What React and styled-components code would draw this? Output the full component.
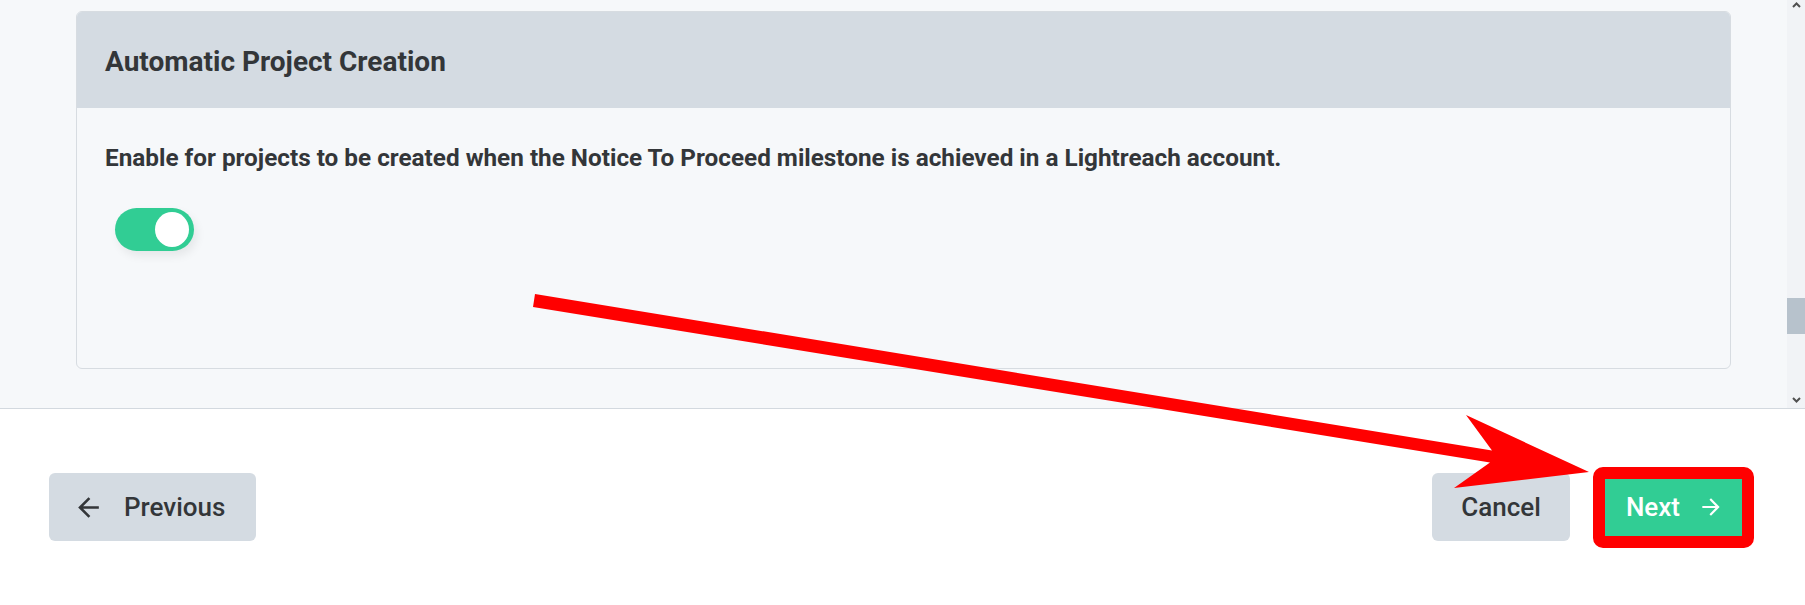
import React from "react";
import styled, { createGlobalStyle } from "styled-components";

const GlobalStyle = createGlobalStyle`
  html, body { margin: 0; padding: 0; background: #ffffff; overflow: hidden; }
  body { font-family: Roboto, "Liberation Sans", Arial, sans-serif; color: #333333; }
  * { box-sizing: border-box; }
`;

const Page = styled.div`
  position: relative;
  width: 1805px;
  height: 605px;
  display: flex;
  flex-direction: column;
  overflow: hidden;
`;

const ScrollArea = styled.div`
  height: 409px;
  flex: none;
  display: flex;
  background: #f6f8fa;
  border-bottom: 1px solid #d3d9df;
`;

const Content = styled.div`
  flex: 1;
  padding: 11px 56px 0 76px;
  overflow: hidden;
`;

const Card = styled.section`
  border: 1px solid #d7dce1;
  border-radius: 6px;
  background: #f6f8fa;
  overflow: hidden;
`;

const CardHeader = styled.header`
  height: 96px;
  display: flex;
  align-items: center;
  padding: 4px 28px 0;
  background: #d4dbe2;
`;

const Title = styled.h2`
  margin: 0;
  font-size: 28px;
  font-weight: 700;
  color: #333639;
  line-height: 1;
`;

const CardBody = styled.div`
  padding: 36px 28px 117px;
`;

const Description = styled.p`
  margin: 0;
  font-size: 24.3px;
  line-height: 28px;
  font-weight: 700;
  color: #333639;
`;

const ToggleTrack = styled.button`
  margin: 36px 0 0 10px;
  width: 79px;
  height: 43px;
  border: none;
  border-radius: 22px;
  padding: 0 5px;
  display: flex;
  align-items: center;
  justify-content: ${(p) => (p.$on ? "flex-end" : "flex-start")};
  background: ${(p) => (p.$on ? "#31cd94" : "#c5ccd3")};
  box-shadow: 3px 5px 10px rgba(0, 0, 0, 0.07);
  cursor: pointer;
`;

const Knob = styled.span`
  width: 34px;
  height: 35px;
  border-radius: 50%;
  background: #ffffff;
`;

const Scrollbar = styled.div`
  width: 18px;
  flex: none;
  display: flex;
  flex-direction: column;
  background: #f1f3f6;
`;

const ScrollArrow = styled.div`
  height: 17px;
  flex: none;
  display: flex;
  align-items: ${(p) => (p.$down ? "flex-end" : "flex-start")};
  justify-content: center;
  padding: ${(p) => (p.$down ? "0 0 5px" : "2px 0 0")};
`;

const TrackGap = styled.div`
  flex: ${(p) => (p.$grow ? "1" : "none")};
  height: ${(p) => (p.$grow ? "auto" : `${p.$h}px`)};
`;

const Thumb = styled.div`
  height: 36px;
  flex: none;
  background: #b7c2cc;
`;

const Footer = styled.footer`
  flex: 1;
  display: flex;
  align-items: center;
  justify-content: space-between;
  padding: 0 56px 0 49px;
  background: #ffffff;
`;

const ButtonGroup = styled.div`
  display: flex;
  align-items: center;
  gap: 28px;
`;

const Button = styled.button`
  position: relative;
  height: 68px;
  padding: ${(p) => p.$pad || "0 28px"};
  border: none;
  border-radius: 6px;
  display: flex;
  align-items: center;
  gap: ${(p) => p.$gap || 0}px;
  font-family: Roboto, "Liberation Sans", Arial, sans-serif;
  font-size: 26px;
  font-weight: 500;
  color: ${(p) => (p.$primary ? "#ffffff" : "#333639")};
  background: ${(p) => (p.$primary ? "#31cd94" : "#d4dbe2")};
  cursor: pointer;
`;

const Highlight = styled.span`
  position: absolute;
  top: -6px;
  left: -5px;
  right: -5px;
  bottom: -7px;
  border: 12px solid #ff0000;
  border-radius: 10px;
  pointer-events: none;
`;

const Annotation = styled.svg`
  position: absolute;
  left: 0;
  top: 0;
  width: 1805px;
  height: 605px;
  pointer-events: none;
`;

const ArrowBack = ({ size }) => (
  <svg width={size} height={size} viewBox="0 0 24 24" fill="currentColor" aria-hidden="true">
    <path d="M20 11H7.83l5.59-5.59L12 4l-8 8 8 8 1.41-1.41L7.83 13H20v-2z" />
  </svg>
);

const ArrowForward = ({ size }) => (
  <svg width={size} height={size} viewBox="0 0 24 24" fill="currentColor" aria-hidden="true">
    <path d="M12 4l-1.41 1.41L16.17 11H4v2h12.17l-5.58 5.59L12 20l8-8z" />
  </svg>
);

const Chevron = ({ down }) => (
  <svg width="9" height="6" viewBox="0 0 9 6" aria-hidden="true">
    <path
      d={down ? "M1 1 L4.5 4.5 L8 1" : "M1 5 L4.5 1.5 L8 5"}
      fill="none"
      stroke="#505050"
      strokeWidth="2"
    />
  </svg>
);

export default function App() {
  return (
    <>
      <GlobalStyle />
      <Page>
        <ScrollArea>
          <Content>
            <Card>
              <CardHeader>
                <Title>Automatic Project Creation</Title>
              </CardHeader>
              <CardBody>
                <Description>
                  Enable for projects to be created when the Notice To Proceed milestone is achieved in a Lightreach account.
                </Description>
                <ToggleTrack $on aria-pressed="true">
                  <Knob />
                </ToggleTrack>
              </CardBody>
            </Card>
          </Content>
          <Scrollbar>
            <ScrollArrow>
              <Chevron />
            </ScrollArrow>
            <TrackGap $h={281} />
            <Thumb />
            <TrackGap $grow />
            <ScrollArrow $down>
              <Chevron down />
            </ScrollArrow>
          </Scrollbar>
        </ScrollArea>
        <Footer>
          <Button $gap={20} $pad="0 31px 0 24px">
            <ArrowBack size={31} />
            Previous
          </Button>
          <ButtonGroup>
            <Button $pad="0 29px">Cancel</Button>
            <Button $primary $gap={18} $pad="0 25px 0 28px">
              Next
              <ArrowForward size={26} />
              <Highlight />
            </Button>
          </ButtonGroup>
        </Footer>
        <Annotation viewBox="0 0 1805 605">
          <polygon
            points="535,294 1492,450.5 1466,415 1589,472 1454,488 1490,462.5 533,307"
            fill="#ff0000"
          />
        </Annotation>
      </Page>
    </>
  );
}
